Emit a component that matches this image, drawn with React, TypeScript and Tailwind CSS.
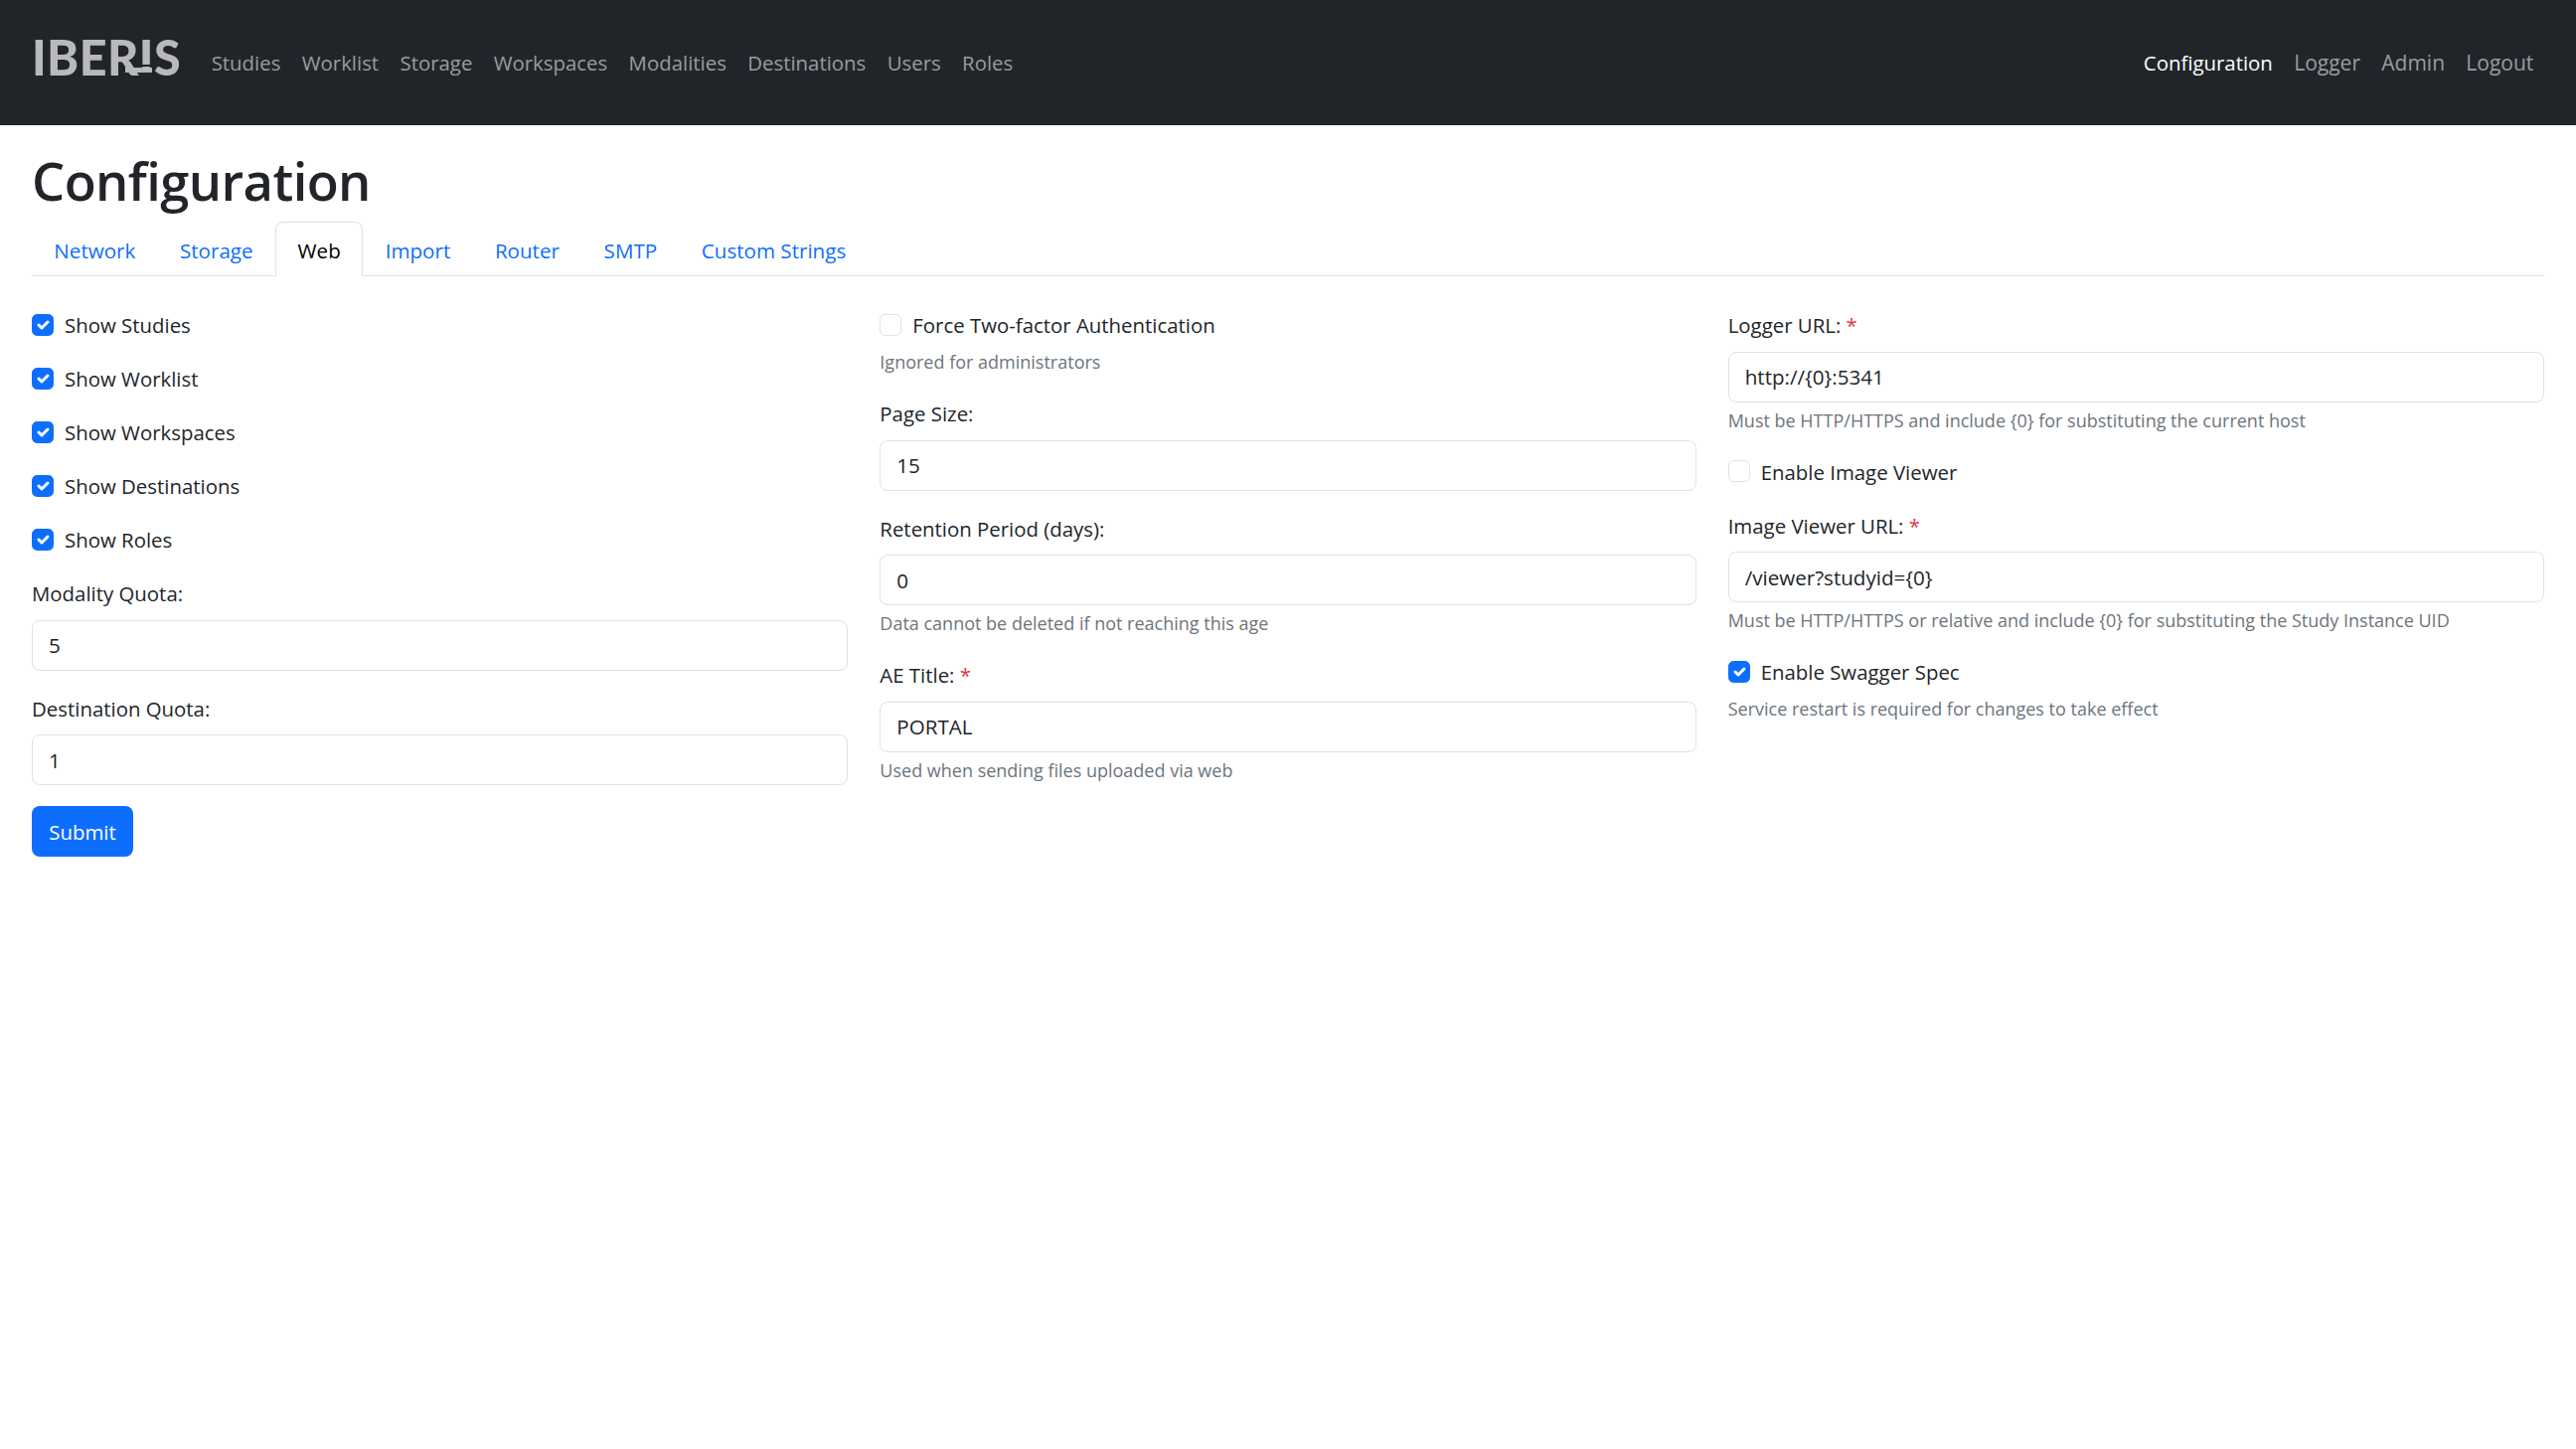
import React from "react";

const font = "font-['Open_Sans','Noto_Sans',sans-serif]";

function Check({ on, label }: { on: boolean; label: string }) {
  return (
    <div className="flex items-center h-8 mb-[22px]">
      {on ? (
        <span className="w-[22px] h-[22px] rounded-[5.33px] bg-[#0d6efd] border border-[#0d6efd] flex items-center justify-center shrink-0 -mt-[1px]">
          <svg viewBox="0 0 20 20" className="w-[20px] h-[20px]">
            <path fill="none" stroke="#fff" strokeLinecap="round" strokeLinejoin="round" strokeWidth="3" d="m6 10 3 3 6-6" />
          </svg>
        </span>
      ) : (
        <span className="w-[22px] h-[22px] rounded-[5.33px] bg-white border border-[#dee2e6] shrink-0 -mt-[1px]" />
      )}
      <span className="ml-[11px] text-[#212529]">{label}</span>
    </div>
  );
}

function Hint({ children, after }: { children: React.ReactNode; after?: boolean }) {
  return (
    <div className={`text-[18px] leading-[28px] text-[#6c757d] ${after ? "mt-[7px]" : "mt-[4px]"}`}>{children}</div>
  );
}

function Field({ label, value, req, hint }: { label: string; value: string; req?: boolean; hint?: string }) {
  return (
    <div className="mb-[22px]">
      <div className="h-8 leading-8 mb-[10.67px] text-[#212529]">
        {label}
        {req && <span className="text-[#dc3545]"> *</span>}
      </div>
      <input
        readOnly
        value={value}
        className="block w-full h-[51px] px-[16px] rounded-[8px] border border-[#dee2e6] bg-white text-[20.6px] text-[#212529] outline-none"
      />
      {hint && <Hint>{hint}</Hint>}
    </div>
  );
}

const left = ["Studies", "Worklist", "Storage", "Workspaces", "Modalities", "Destinations", "Users", "Roles"];
const right = ["Configuration", "Logger", "Admin", "Logout"];
const tabs = ["Network", "Storage", "Web", "Import", "Router", "SMTP", "Custom Strings"];

export default function App() {
  return (
    <div className={`${font} min-h-[1458px] bg-white text-[20.4px] leading-8 text-[#212529]`}>
      <nav className="h-[126px] bg-[#212529] flex items-center px-[32px] justify-between">
        <div className="flex items-center">
          <div className="w-[150px] h-[40px] -mt-[12px] mr-[20px] text-[#b9b9b9] font-['Lato',sans-serif] font-black text-[48.5px] leading-[40px] tracking-[0.4px] whitespace-nowrap">
            IBER
            <span className="relative inline-block">
              I
              <span className="absolute left-0 right-0 top-[28px] h-[2px] bg-[#212529]" />
              <span className="absolute left-[-14px] right-[2px] top-[31px] h-[5px] bg-[#b9b9b9]" />
              <span className="absolute left-0 right-0 top-[36px] h-[3px] bg-[#212529]" />
            </span>
            S
          </div>
          {left.map((t) => (
            <a key={t} className="px-[10.67px] text-[#9a9c9e]">{t}</a>
          ))}
        </div>
        <div className="flex items-center">
          {right.map((t, i) => (
            <a key={t} className={`px-[10.67px] ${i === 0 ? "text-white" : "text-[21px] text-[#9a9c9e]"}`}>{t}</a>
          ))}
        </div>
      </nav>
      <main className="px-[32px]">
        <h1 className="text-[52.5px] leading-[64px] font-semibold text-[#212529] tracking-[-0.6px] pt-[24px] mb-[9px]">Configuration</h1>
        <div className="flex border-b border-[#dee2e6] h-[55px] mb-[33px] text-[20.6px]">
          {tabs.map((t) => (
            <a
              key={t}
              className={
                t === "Web"
                  ? "h-[55px] px-[21.6px] pt-[1px] leading-[54px] rounded-t-[8px] border border-[#dee2e6] border-b-white bg-white text-black"
                  : "h-[54px] px-[22.33px] pt-[2px] leading-[54px] text-[#0d6efd]"
              }
            >
              {t}
            </a>
          ))}
        </div>
        <div className="grid grid-cols-3 gap-x-[32px]">
          <div>
            <Check on label="Show Studies" />
            <Check on label="Show Worklist" />
            <Check on label="Show Workspaces" />
            <Check on label="Show Destinations" />
            <Check on label="Show Roles" />
            <Field label="Modality Quota:" value="5" />
            <Field label="Destination Quota:" value="1" />
            <button className="w-[102px] h-[51px] pt-[1px] -mt-[1px] rounded-[8px] bg-[#0d6efd] text-white block">Submit</button>
          </div>
          <div>
            <div className="mb-[22px]">
              <div className="[&>div]:mb-0">
                <Check on={false} label="Force Two-factor Authentication" />
              </div>
              <Hint after>Ignored for administrators</Hint>
            </div>
            <Field label="Page Size:" value="15" />
            <Field label="Retention Period (days):" value="0" hint="Data cannot be deleted if not reaching this age" />
            <Field label="AE Title:" req value="PORTAL" hint="Used when sending files uploaded via web" />
          </div>
          <div>
            <Field
              label="Logger URL:"
              req
              value="http://{0}:5341"
              hint="Must be HTTP/HTTPS and include {0} for substituting the current host"
            />
            <Check on={false} label="Enable Image Viewer" />
            <Field
              label="Image Viewer URL:"
              req
              value="/viewer?studyid={0}"
              hint="Must be HTTP/HTTPS or relative and include {0} for substituting the Study Instance UID"
            />
            <div className="[&>div]:mb-0">
              <Check on label="Enable Swagger Spec" />
            </div>
            <Hint after>Service restart is required for changes to take effect</Hint>
          </div>
        </div>
      </main>
    </div>
  );
}
